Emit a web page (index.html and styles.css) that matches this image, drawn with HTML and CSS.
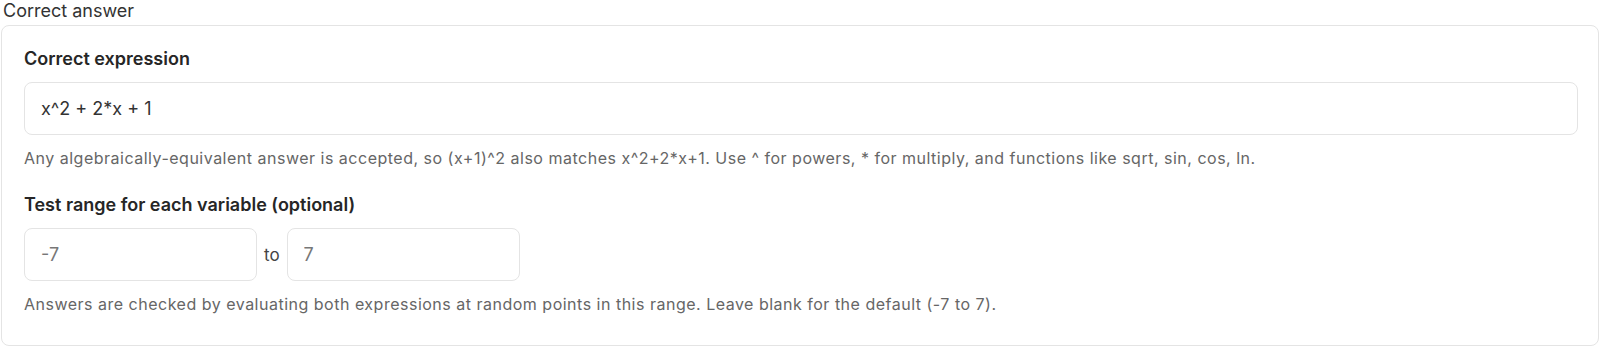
FILE: index.html
```html
<!DOCTYPE html>
<html lang="en">
<head>
    <meta charset="UTF-8">
    <title>Correct answer</title>
    <link rel="stylesheet" href="styles.css">
</head>
<body>

<div class="section-title">Correct answer</div>
<div class="answer-box">
    <div class="form-group">
        <label for="expression">Correct expression</label>
        <input type="text" id="expression" class="wide" value="x^2 + 2*x + 1">
        <p class="help">Any algebraically-equivalent answer is accepted, so (x+1)^2 also matches x^2+2*x+1. Use ^ for powers, * for multiply, and functions like sqrt, sin, cos, ln.</p>
    </div>

    <div class="form-group">
        <label for="range-min">Test range for each variable (optional)</label>
        <div class="range-row">
            <input type="text" id="range-min" class="small" placeholder="-7">
            <span class="to">to</span>
            <input type="text" id="range-max" class="small" placeholder="7">
        </div>
        <p class="help">Answers are checked by evaluating both expressions at random points in this range. Leave blank for the default (-7 to 7).</p>
    </div>
</div>

</body>
</html>
```

FILE: styles.css
```css
body {
    font-family: Inter, "Liberation Sans", Arial, sans-serif;
    background-color: #ffffff;
    color: #222;
    margin: 0;
    padding: 0 1px;
}
.section-title {
    height: 25px;
    padding-left: 2px;
    font-size: 18px;
    line-height: 22px;
    color: #333;
}
.answer-box {
    padding: 22px 20px 31px 22px;
    border: 1px solid #e4e4e4;
    border-radius: 8px;
}
.form-group + .form-group {
    margin-top: 26px;
}
label {
    display: block;
    font-size: 18px;
    line-height: 22px;
    font-weight: 600;
    color: #262626;
    margin-bottom: 12px;
}
input {
    box-sizing: border-box;
    height: 53px;
    padding: 0 16px;
    font-family: inherit;
    font-size: 18px;
    color: #333;
    border: 1px solid #e4e4e4;
    border-radius: 8px;
    background-color: #fff;
    outline: none;
}
input::placeholder {
    color: #777;
}
.wide {
    width: 100%;
}
.range-row {
    display: flex;
    align-items: center;
    gap: 7px;
}
.small {
    width: 233px;
}
.to {
    font-size: 17px;
    color: #444;
}
.help {
    margin: 13px 0 0;
    font-size: 16px;
    line-height: 20px;
    letter-spacing: 0.5px;
    color: #666;
}
```
